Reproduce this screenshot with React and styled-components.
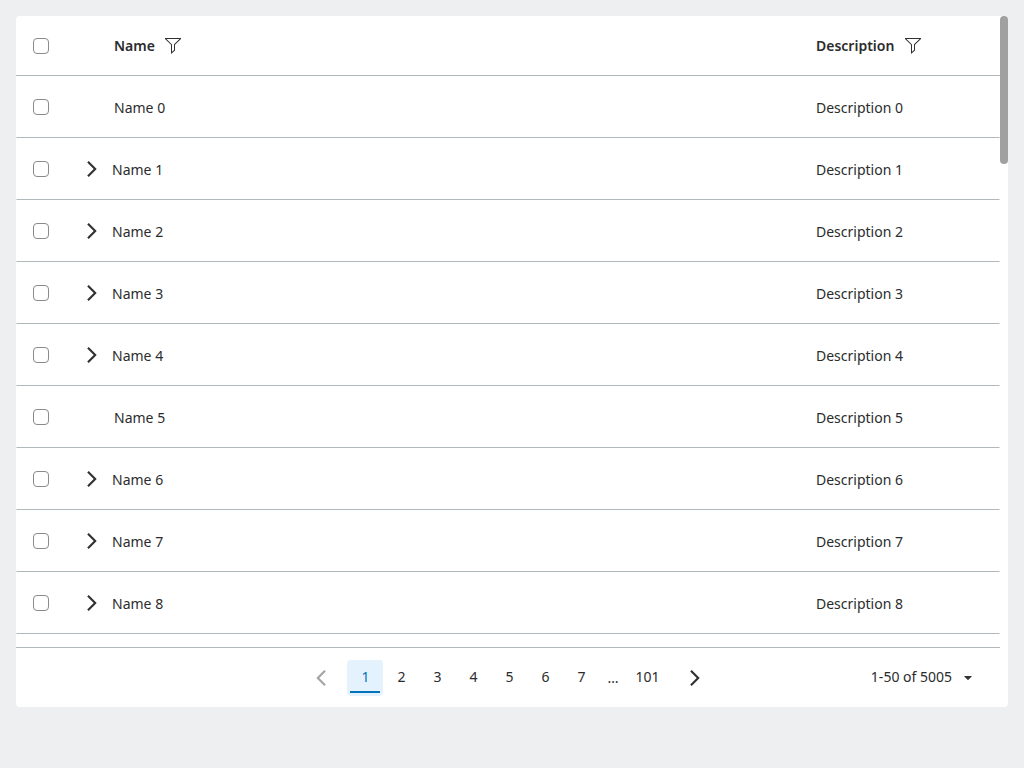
import React from 'react';
import styled, { createGlobalStyle } from 'styled-components';

const GlobalStyle = createGlobalStyle`
  *, *::before, *::after { box-sizing: border-box; }
  body {
    margin: 0;
    background: #eeeff1;
    color: #2b2c2d;
    font: 400 14px/22px "Noto Sans", "Open Sans", sans-serif;
  }
`;

const Page = styled.main`
  height: 768px;
  padding: 16px;
`;

const Panel = styled.section`
  display: flex;
  flex-direction: column;
  height: 691px;
  background: #fff;
  border-radius: 4px;
`;

const Viewport = styled.div`
  display: flex;
  height: 631px;
  overflow: hidden;
`;

const Table = styled.div`
  flex: 1;
  min-width: 0;
`;

const Row = styled.div`
  display: flex;
  align-items: center;
  height: ${({ $header }) => ($header ? 60 : 62)}px;
  border-bottom: 1px solid #b0b8bb;
  font-weight: ${({ $header }) => ($header ? 600 : 400)};
`;

const BodyRow = styled(Row)`
  border-left: 1px solid transparent;
  border-right: 1px solid transparent;
`;

const SelectCell = styled.div`
  display: flex;
  width: ${({ $header }) => ($header ? 50 : 49)}px;
  padding-left: ${({ $header }) => ($header ? 17 : 16)}px;
  margin-top: ${({ $header }) => ($header ? 1 : 0)}px;
`;

const Checkbox = styled.input.attrs({ type: 'checkbox' })`
  appearance: none;
  width: 16px;
  height: 16px;
  margin: 0;
  border: 1px solid #898a8c;
  border-radius: 4px;
  background: #fff;
`;

const NameCell = styled.div`
  display: flex;
  align-items: center;
  width: 750px;
  gap: ${({ $header }) => ($header ? 10 : 12)}px;
  padding-left: ${({ $expandable }) => ($expandable ? 18 : 48)}px;
`;

const DescriptionCell = styled.div`
  display: flex;
  align-items: center;
  gap: ${({ $header }) => ($header ? 11 : 0)}px;
`;

const Label = styled.span`
  position: relative;
  top: ${({ $header }) => ($header ? 0 : 1)}px;
`;

const Icon = styled.svg`
  display: block;
  flex: none;
  width: 16px;
  height: 16px;
  fill: #303132;
`;

const MutedIcon = styled(Icon)`
  fill: #a3a4a5;
`;

const Track = styled.div`
  width: 8px;
`;

const Thumb = styled.div`
  height: 148px;
  border-radius: 4px;
  background: #a0a0a0;
`;

const Footer = styled.footer`
  display: grid;
  grid-template-columns: 287px 1fr 200px;
  align-items: center;
  height: 60px;
  margin-right: 8px;
  border-top: 1px solid #b0b8bb;
`;

const Pages = styled.nav`
  grid-column: 2;
  display: flex;
  align-items: center;
`;

const PageButton = styled.button`
  width: ${({ $wide }) => ($wide ? 44 : 36)}px;
  height: 36px;
  padding: 0 0 3px;
  border: 0;
  border-radius: 4px;
  background: ${({ $current }) => ($current ? '#e4f2fd' : 'transparent')};
  color: ${({ $current }) => ($current ? '#0073ba' : 'inherit')};
  font: inherit;
  display: flex;
  flex-direction: column;
  align-items: center;
  justify-content: flex-end;

  &::after {
    content: '';
    width: 30px;
    height: 2px;
    margin-top: 3px;
    background: ${({ $current }) => ($current ? '#0073ba' : 'transparent')};
  }
`;

const PageNumber = styled.span`
  padding-left: ${({ $wide }) => ($wide ? 0 : 1)}px;
  padding-right: ${({ $wide }) => ($wide ? 1 : 0)}px;
`;

const ArrowButton = styled.button`
  display: flex;
  align-items: center;
  justify-content: center;
  width: 36px;
  height: 36px;
  margin: ${({ $previous }) => ($previous ? '0 8px 0 0' : '0 0 0 7px')};
  padding: 0;
  border: 0;
  background: transparent;
`;

const Ellipsis = styled.span`
  width: 27px;
  padding-left: 1px;
  text-align: center;
`;

const SizeButton = styled.button`
  display: flex;
  align-items: center;
  justify-self: end;
  gap: 8px;
  margin-right: 24px;
  padding: 0 0 1px;
  border: 0;
  background: transparent;
  color: inherit;
  font: inherit;
`;

const FilterIcon = () => (
  <Icon viewBox="0 0 16 16">
    <path d="M16 0H0v1l6 5.8V16l4-3.5V6.8L16 1zM9.3 6.1 9 6.4v5.7l-2 1.7V6.4L1.5 1h13z" />
  </Icon>
);

const ChevronRight = () => (
  <Icon viewBox="0 0 16 16">
    <path d="M4.7 0 3.2 1.5 9.7 8l-6.5 6.5L4.7 16l8-8z" />
  </Icon>
);

const ChevronLeft = () => (
  <MutedIcon viewBox="0 0 16 16">
    <path d="m11.3 0 1.5 1.5L6.3 8l6.5 6.5-1.5 1.5-8-8z" />
  </MutedIcon>
);

const CaretDown = () => (
  <Icon viewBox="0 0 16 16">
    <path d="M4.6 7h6.8c.4 0 .5.3.3.6L8.4 10.8a.6.6 0 0 1-.8 0L4.3 7.6c-.2-.3-.1-.6.3-.6z" />
  </Icon>
);

const rows = Array.from({ length: 9 }, (_, index) => ({
  index,
  expandable: index % 5 !== 0,
}));

const pages = [1, 2, 3, 4, 5, 6, 7];

export default function App() {
  return (
    <Page>
      <GlobalStyle />
      <Panel>
        <Viewport>
          <Table>
            <Row $header>
              <SelectCell $header><Checkbox aria-label="Select all" /></SelectCell>
              <NameCell $header>
                <Label $header>Name</Label>
                <FilterIcon />
              </NameCell>
              <DescriptionCell $header>
                <Label $header>Description</Label>
                <FilterIcon />
              </DescriptionCell>
            </Row>
            {rows.map(({ index, expandable }) => (
              <BodyRow key={index}>
                <SelectCell><Checkbox aria-label={`Select row ${index}`} /></SelectCell>
                <NameCell $expandable={expandable}>
                  {expandable && <ChevronRight />}
                  <Label>Name {index}</Label>
                </NameCell>
                <DescriptionCell><Label>Description {index}</Label></DescriptionCell>
              </BodyRow>
            ))}
          </Table>
          <Track><Thumb /></Track>
        </Viewport>
        <Footer>
          <Pages>
            <ArrowButton $previous aria-label="Previous page" disabled><ChevronLeft /></ArrowButton>
            {pages.map((page) => (
              <PageButton key={page} $current={page === 1}>
                <PageNumber>{page}</PageNumber>
              </PageButton>
            ))}
            <Ellipsis>…</Ellipsis>
            <PageButton $wide><PageNumber $wide>101</PageNumber></PageButton>
            <ArrowButton aria-label="Next page"><ChevronRight /></ArrowButton>
          </Pages>
          <SizeButton>
            1-50 of 5005
            <CaretDown />
          </SizeButton>
        </Footer>
      </Panel>
    </Page>
  );
}
